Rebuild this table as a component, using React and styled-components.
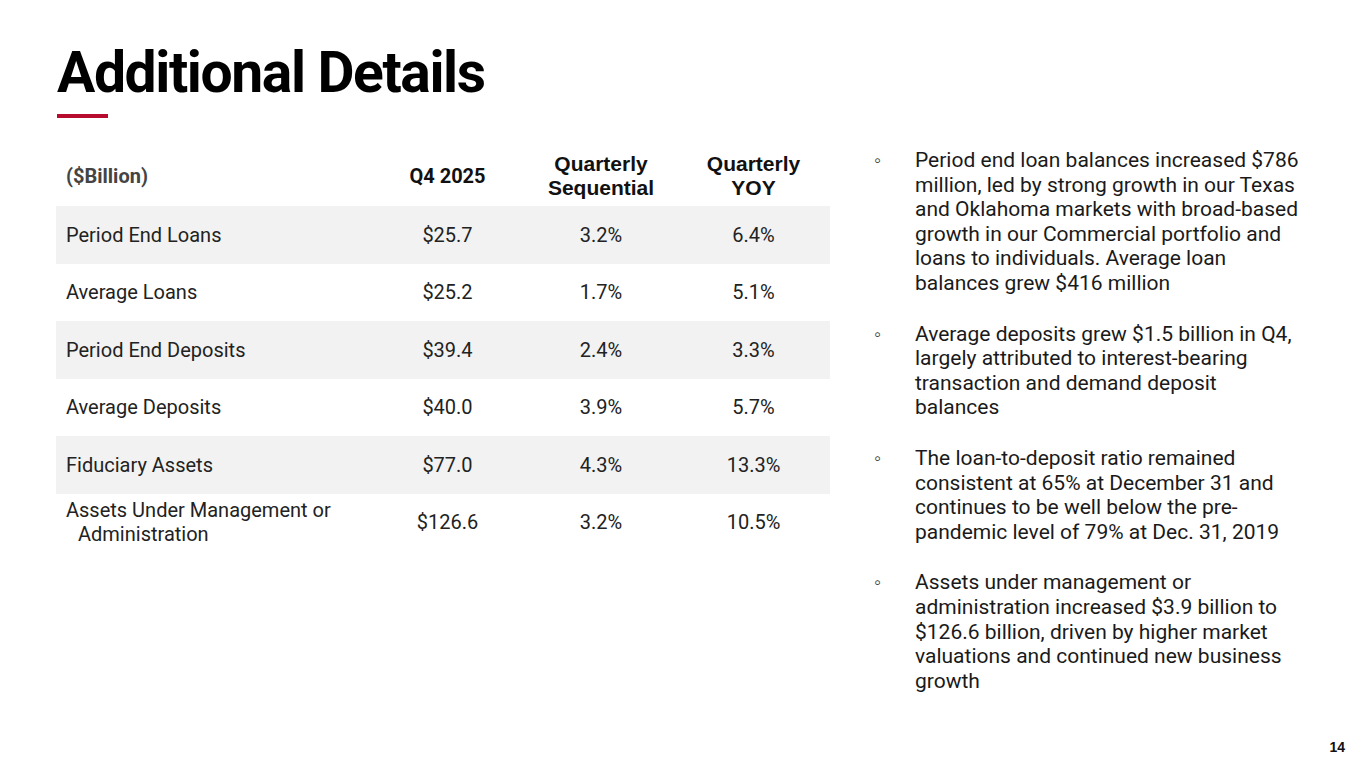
import React from 'react'
import styled, { createGlobalStyle } from 'styled-components'

const Global = createGlobalStyle`
  html, body {
    margin: 0;
    padding: 0;
    background: #fff;
  }
  body {
    font-family: Roboto, 'Liberation Sans', Arial, sans-serif;
    color: #1a1a1a;
  }
`

const Slide = styled.div`
  width: 1365px;
  height: 769px;
  position: relative;
  overflow: hidden;
  box-sizing: border-box;
  padding: 38px 0 0 56px;
`

const Title = styled.h1`
  margin: 0 0 0 1px;
  font-family: Roboto, sans-serif;
  font-weight: 700;
  font-size: 57px;
  line-height: 70px;
  color: #000;
  letter-spacing: -1.4px;
`

const Accent = styled.div`
  width: 51px;
  height: 4px;
  margin: 6px 0 0 1px;
  background: #b80c2f;
`

const Body = styled.div`
  display: flex;
  align-items: flex-start;
  margin-top: 27px;
`

const Table = styled.div`
  width: 774px;
  display: grid;
  grid-template-columns: 314px 155px 152px 153px;
`

const Row = styled.div`
  display: contents;
  & > div {
    background: ${p => (p.$shaded ? '#f2f2f2' : 'transparent')};
    min-height: ${p => p.$h || 57.5}px;
  }
`

const Cell = styled.div`
  display: flex;
  align-items: center;
  justify-content: ${p => (p.$left ? 'flex-start' : 'center')};
  text-align: ${p => (p.$left ? 'left' : 'center')};
  box-sizing: border-box;
  padding: ${p => (p.$left ? '0 10px' : '0')};
  font-size: 20px;
  line-height: 24px;
  color: #222;
`

const HeadCell = styled(Cell)`
  font-family: ${p => (p.$roboto ? 'Roboto' : "'Liberation Sans', Arial")}, sans-serif;
  font-weight: 700;
  color: ${p => (p.$muted ? '#444' : '#111')};
  font-size: ${p => (p.$roboto ? 20 : 21)}px;
  line-height: 24px;
`

const Hanging = styled.span`
  display: block;
  padding-left: 12px;
  text-indent: -12px;
`

const Notes = styled.ul`
  list-style: none;
  margin: 0 0 0 44px;
  padding: 0;
  width: 440px;
  margin-top: 3px;
`

const Note = styled.li`
  display: flex;
  font-size: 21px;
  line-height: 24.6px;
  color: #1a1a1a;
  margin-bottom: 26px;
`

const Dot = styled.span`
  flex: 0 0 41px;
  font-size: 20px;
  color: #333;
  line-height: 24.6px;
`

const NoteText = styled.span`
  width: 388px;
`

const PageNum = styled.div`
  position: absolute;
  right: 20px;
  bottom: 14px;
  font-family: 'Liberation Sans', Arial, sans-serif;
  font-weight: 700;
  font-size: 14px;
  color: #111;
`

const rows = [
  ['Period End Loans', '$25.7', '3.2%', '6.4%'],
  ['Average Loans', '$25.2', '1.7%', '5.1%'],
  ['Period End Deposits', '$39.4', '2.4%', '3.3%'],
  ['Average Deposits', '$40.0', '3.9%', '5.7%'],
  ['Fiduciary Assets', '$77.0', '4.3%', '13.3%'],
  ['Assets Under Management or Administration', '$126.6', '3.2%', '10.5%']
]

const notes = [
  'Period end loan balances increased $786 million, led by strong growth in our Texas and Oklahoma markets with broad-based growth in our Commercial portfolio and loans to individuals. Average loan balances grew $416 million',
  'Average deposits grew $1.5 billion in Q4, largely attributed to interest-bearing transaction and demand deposit balances',
  'The loan-to-deposit ratio remained consistent at 65% at December 31 and continues to be well below the pre-pandemic level of 79% at Dec. 31, 2019',
  'Assets under management or administration increased $3.9 billion to $126.6 billion, driven by higher market valuations and continued new business growth'
]

const App = () => (
  <>
    <Global />
    <Slide>
      <Title>Additional Details</Title>
      <Accent />
      <Body>
        <Table>
          <Row $h={61}>
            <HeadCell $left $roboto $muted>($Billion)</HeadCell>
            <HeadCell $roboto>Q4 2025</HeadCell>
            <HeadCell>Quarterly<br />Sequential</HeadCell>
            <HeadCell>Quarterly<br />YOY</HeadCell>
          </Row>
          {rows.map((r, i) => (
            <Row key={r[0]} $shaded={i % 2 === 0}>
              <Cell $left>{i === rows.length - 1 ? <Hanging>{r[0]}</Hanging> : r[0]}</Cell>
              <Cell>{r[1]}</Cell>
              <Cell>{r[2]}</Cell>
              <Cell>{r[3]}</Cell>
            </Row>
          ))}
        </Table>
        <Notes>
          {notes.map(n => (
            <Note key={n}>
              <Dot>◦</Dot>
              <NoteText>{n}</NoteText>
            </Note>
          ))}
        </Notes>
      </Body>
      <PageNum>14</PageNum>
    </Slide>
  </>
)

export default App
